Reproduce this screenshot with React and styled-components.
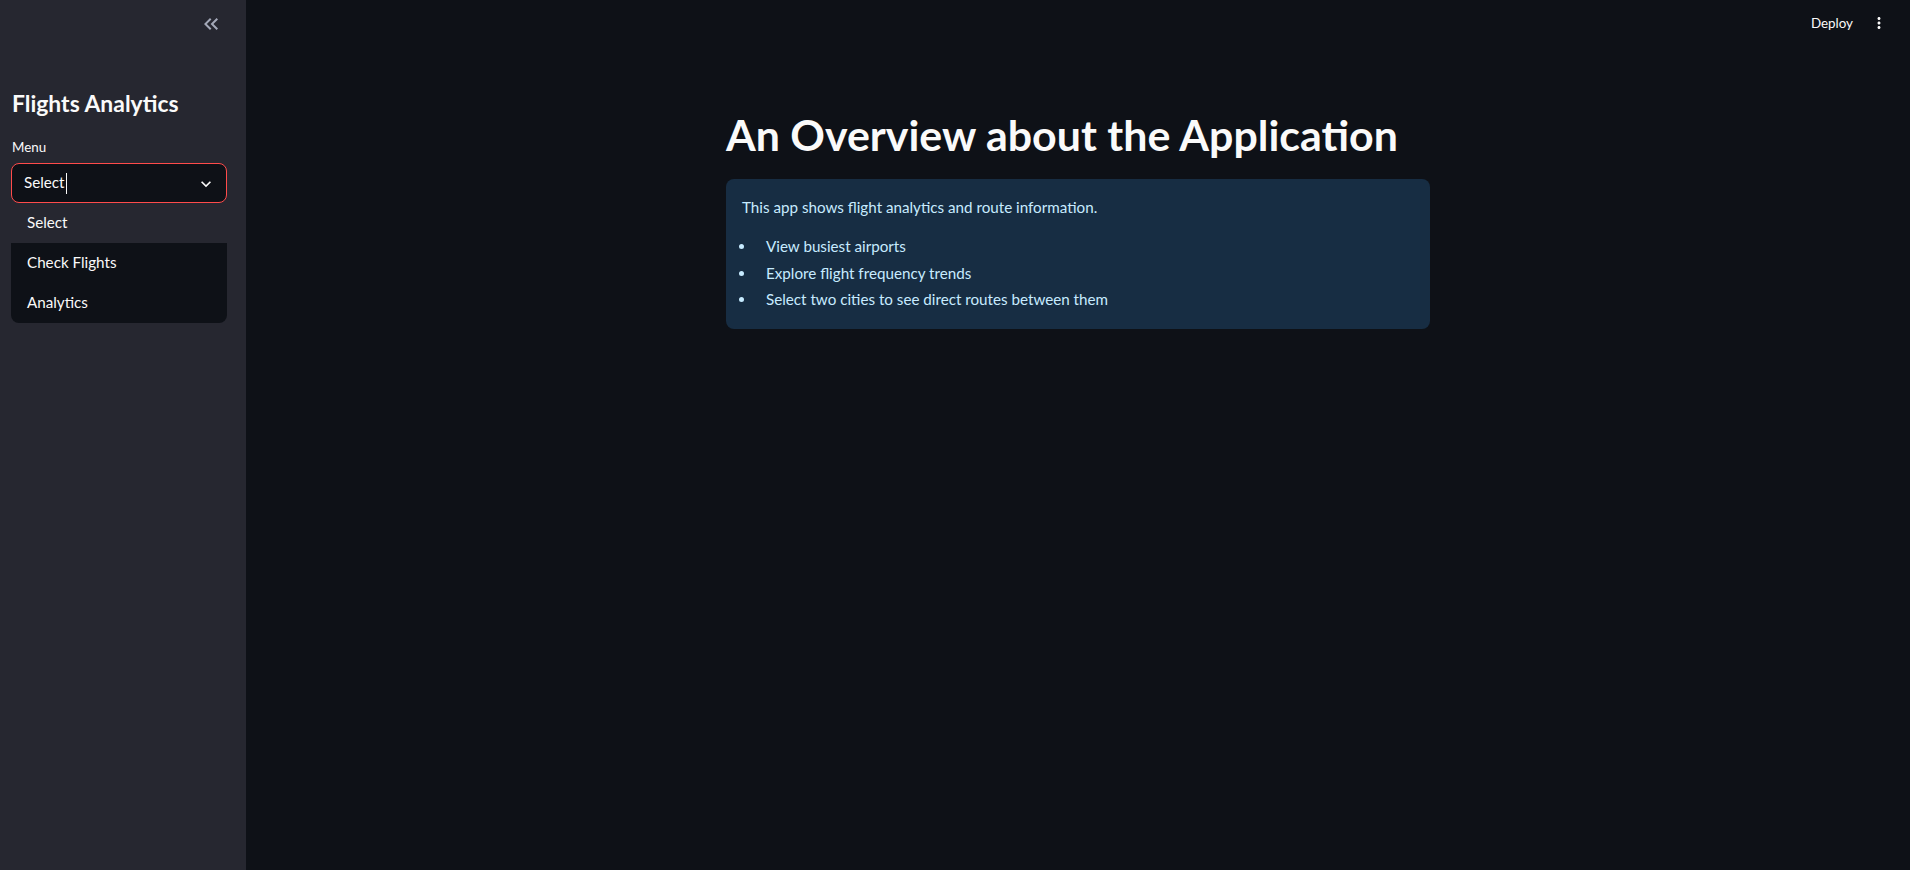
import React from 'react';
import styled, { createGlobalStyle } from 'styled-components';

const FONT = '"Lato", "Noto Sans", sans-serif';

const GlobalStyle = createGlobalStyle`
  html, body {
    margin: 0;
    padding: 0;
    background: #0e1117;
    font-family: ${FONT};
    color: #fafafa;
  }
  * { box-sizing: border-box; }
`;

const Shell = styled.div`
  display: flex;
  height: 100vh;
  overflow: hidden;
`;

const Sidebar = styled.aside`
  width: 246px;
  flex: 0 0 246px;
  background: #262730;
  padding: 12px 19px 0 11px;
  display: flex;
  flex-direction: column;
`;

const CollapseRow = styled.div`
  display: flex;
  justify-content: flex-end;
  height: 24px;
  margin-right: 4px;
  color: #a3a8b8;
`;

const SideTitle = styled.h1`
  margin: 53px 0 0 1px;
  font-size: 22.9px;
  font-weight: 700;
  line-height: 29px;
  color: #fafafa;
`;

const FieldLabel = styled.label`
  margin: 19px 0 0 1px;
  font-size: 13.4px;
  line-height: 20px;
  color: #fafafa;
`;

const SelectBox = styled.div`
  margin-top: 6px;
  height: 40px;
  border: 1px solid #ff4b4b;
  border-radius: 8px;
  background: #0e1117;
  display: flex;
  align-items: center;
  justify-content: space-between;
  padding: 1px 10px 0 12px;
  font-size: 15.2px;
`;

const Caret = styled.span`
  display: inline-block;
  width: 1px;
  height: 21px;
  background: #fafafa;
  margin-left: 1px;
  vertical-align: middle;
`;

const Menu = styled.ul`
  list-style: none;
  margin: 0;
  padding: 0;
  background: #0e1117;
  border-radius: 0 0 8px 8px;
  overflow: hidden;
`;

const MenuItem = styled.li`
  height: 40px;
  display: flex;
  align-items: center;
  padding: 0 0 2px 16px;
  font-size: 15.2px;
  background: ${(p) => (p.$active ? '#262730' : 'transparent')};
`;

const Main = styled.main`
  flex: 1;
  display: flex;
  flex-direction: column;
  background: #0e1117;
`;

const TopBar = styled.header`
  height: 46px;
  display: flex;
  align-items: center;
  justify-content: flex-end;
  gap: 17px;
  padding-right: 22px;
  font-size: 13.4px;
  color: #fafafa;
`;

const Content = styled.section`
  width: 704px;
  margin: 0 auto;
  padding-top: 62px;
`;

const PageTitle = styled.h1`
  margin: 0;
  font-size: 42.9px;
  font-weight: 700;
  line-height: 53px;
  color: #fafafa;
`;

const InfoBox = styled.div`
  margin-top: 18px;
  background: #172d43;
  border-radius: 8px;
  padding: 16px;
  color: #c7ebff;
  font-size: 15.2px;
  line-height: 24px;
`;

const InfoText = styled.p`
  margin: 0 0 14px;
`;

const Bullets = styled.ul`
  margin: 0;
  padding-left: 14px;
`;

const Bullet = styled.li`
  padding-left: 10px;
  line-height: 26.5px;
`;

const DoubleChevron = () => (
  <svg width="24" height="24" viewBox="0 0 24 24" fill="currentColor">
    <path d="M17.59 18L19 16.59 14.42 12 19 7.41 17.59 6l-6 6z" />
    <path d="M11 18l1.41-1.41L7.83 12l4.58-4.59L11 6l-6 6z" />
  </svg>
);

const ChevronDown = () => (
  <svg width="20" height="20" viewBox="0 0 24 24" fill="currentColor">
    <path d="M16.59 8.59L12 13.17 7.41 8.59 6 10l6 6 6-6z" />
  </svg>
);

const MoreVert = () => (
  <svg width="18" height="18" viewBox="0 0 24 24" fill="currentColor">
    <path d="M12 8c1.1 0 2-.9 2-2s-.9-2-2-2-2 .9-2 2 .9 2 2 2zm0 2c-1.1 0-2 .9-2 2s.9 2 2 2 2-.9 2-2-.9-2-2-2zm0 6c-1.1 0-2 .9-2 2s.9 2 2 2 2-.9 2-2-.9-2-2-2z" />
  </svg>
);

export default function App() {
  return (
    <>
      <GlobalStyle />
      <Shell>
        <Sidebar>
          <CollapseRow>
            <DoubleChevron />
          </CollapseRow>
          <SideTitle>Flights Analytics</SideTitle>
          <FieldLabel>Menu</FieldLabel>
          <SelectBox>
            <span>
              Select
              <Caret />
            </span>
            <ChevronDown />
          </SelectBox>
          <Menu>
            <MenuItem $active>Select</MenuItem>
            <MenuItem>Check Flights</MenuItem>
            <MenuItem>Analytics</MenuItem>
          </Menu>
        </Sidebar>
        <Main>
          <TopBar>
            <span>Deploy</span>
            <MoreVert />
          </TopBar>
          <Content>
            <PageTitle>An Overview about the Application</PageTitle>
            <InfoBox>
              <InfoText>This app shows flight analytics and route information.</InfoText>
              <Bullets>
                <Bullet>View busiest airports</Bullet>
                <Bullet>Explore flight frequency trends</Bullet>
                <Bullet>Select two cities to see direct routes between them</Bullet>
              </Bullets>
            </InfoBox>
          </Content>
        </Main>
      </Shell>
    </>
  );
}
